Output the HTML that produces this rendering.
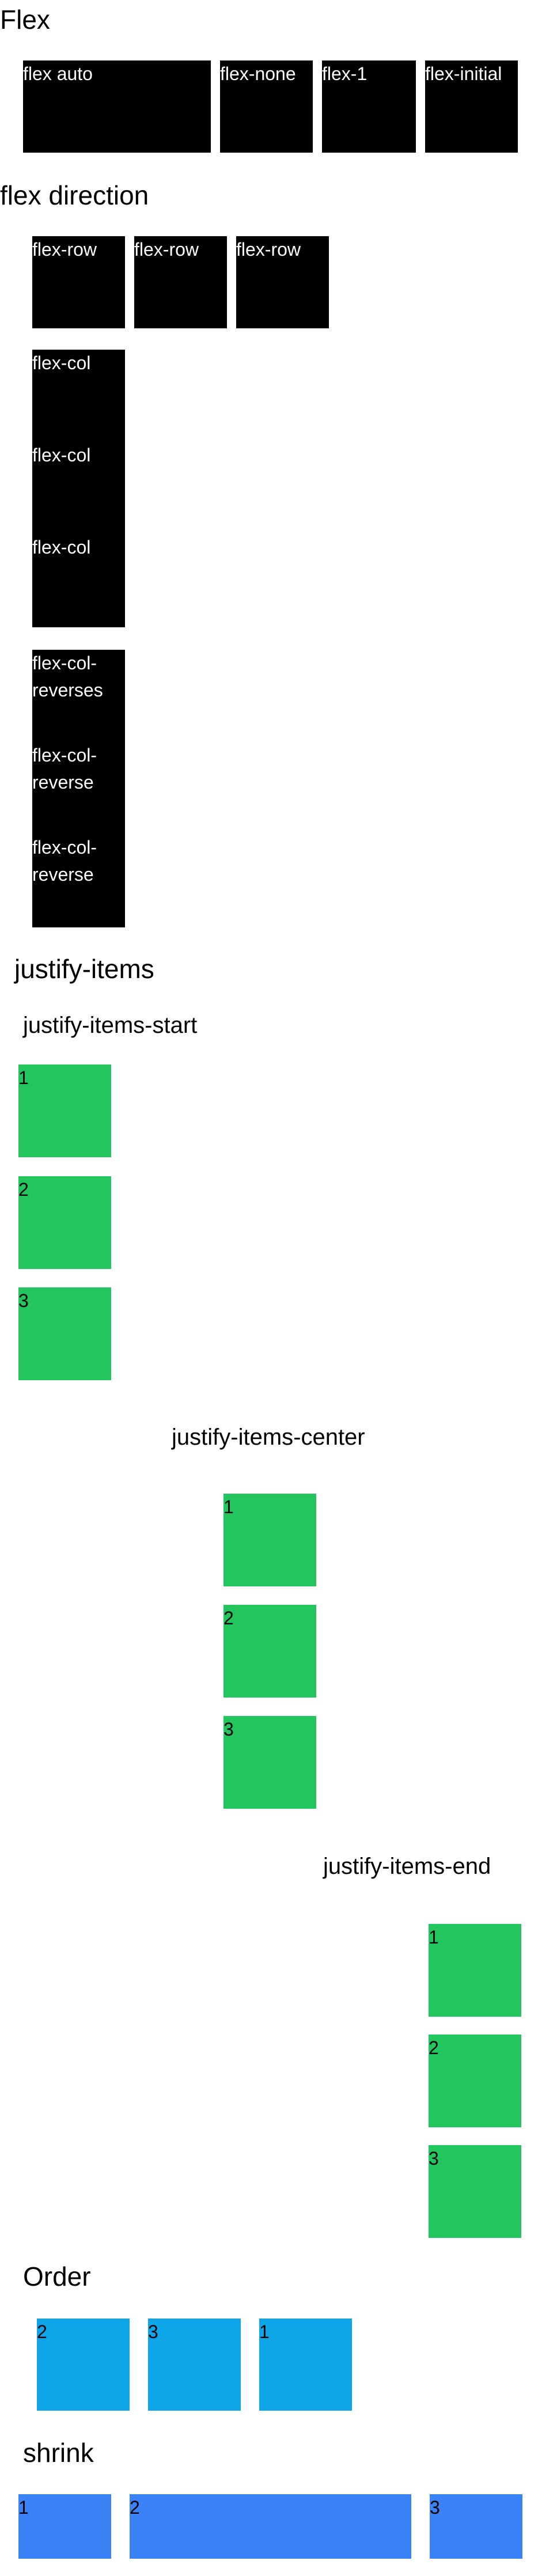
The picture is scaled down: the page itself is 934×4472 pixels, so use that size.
<!DOCTYPE html>
<html><head><meta charset="utf-8">
<style>
*{margin:0;padding:0;box-sizing:border-box}
html,body{width:934px;height:4472px;background:#fff;overflow:hidden}
body{position:relative;font-family:"Liberation Sans",sans-serif;color:#000}
.a{position:absolute}
.h{font-size:46px;line-height:1;white-space:nowrap}
.s{font-size:40px;line-height:1;white-space:nowrap}
.b{position:absolute;background:#000;color:#fff;font-size:32px;line-height:47px}
.g{position:absolute;background:#22c55e;width:161px;height:161px;font-size:32px;line-height:47px}
.o{position:absolute;background:#0ea5e9;top:4025px;height:160px;width:161px;font-size:32px;line-height:47px}
.k{position:absolute;background:#3b82f6;top:4330px;height:112px;font-size:32px;line-height:47px}
.ci{height:160px}
</style></head><body>
<div class="a h" style="left:0;top:11px">Flex</div>
<div class="b" style="left:40px;top:105px;width:326px;height:160px">flex auto</div>
<div class="b" style="left:382px;top:105px;width:161px;height:160px">flex-none</div>
<div class="b" style="left:559px;top:105px;width:163px;height:160px">flex-1</div>
<div class="b" style="left:738px;top:105px;width:161px;height:160px">flex-initial</div>

<div class="a h" style="left:0;top:316px">flex direction</div>
<div class="b" style="left:56px;top:410px;width:161px;height:160px">flex-row</div>
<div class="b" style="left:233px;top:410px;width:161px;height:160px">flex-row</div>
<div class="b" style="left:410px;top:410px;width:161px;height:160px">flex-row</div>

<div class="b" style="left:56px;top:607px;width:161px;height:482px">
<div class="ci">flex-col</div><div class="ci">flex-col</div><div class="ci">flex-col</div></div>

<div class="b" style="left:56px;top:1128px;width:161px;height:482px">
<div class="ci">flex-col-<br>reverses</div><div class="ci">flex-col-<br>reverse</div><div class="ci">flex-col-<br>reverse</div></div>

<div class="a h" style="left:25px;top:1659px">justify-items</div>
<div class="a s" style="left:40px;top:1760px">justify-items-start</div>
<div class="g" style="left:32px;top:1848px">1</div>
<div class="g" style="left:32px;top:2042px">2</div>
<div class="g" style="left:32px;top:2235px">3</div>

<div class="a s" style="left:298px;top:2475px">justify-items-center</div>
<div class="g" style="left:388px;top:2593px">1</div>
<div class="g" style="left:388px;top:2786px">2</div>
<div class="g" style="left:388px;top:2979px">3</div>

<div class="a s" style="left:561px;top:3220px">justify-items-end</div>
<div class="g" style="left:744px;top:3340px">1</div>
<div class="g" style="left:744px;top:3532px">2</div>
<div class="g" style="left:744px;top:3724px">3</div>

<div class="a h" style="left:40px;top:3929px">Order</div>
<div class="o" style="left:64px">2</div>
<div class="o" style="left:257px">3</div>
<div class="o" style="left:450px">1</div>

<div class="a h" style="left:40px;top:4235px">shrink</div>
<div class="k" style="left:32px;width:161px">1</div>
<div class="k" style="left:225px;width:489px">2</div>
<div class="k" style="left:746px;width:161px">3</div>
</body></html>
